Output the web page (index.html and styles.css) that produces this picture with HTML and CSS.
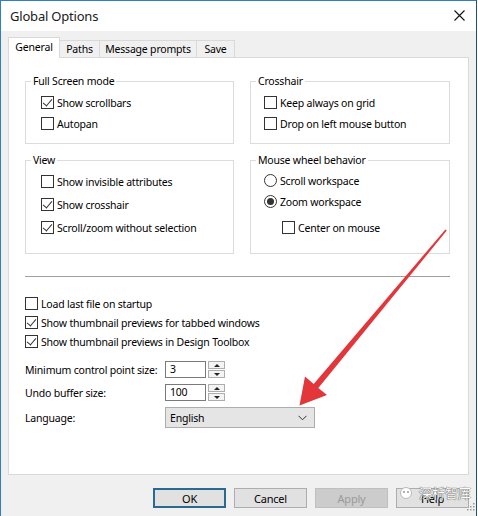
FILE: index.html
```html
<!DOCTYPE html>
<html lang="en">
<head>
<meta charset="UTF-8">
<title>Global Options</title>
<link rel="stylesheet" href="styles.css">
</head>
<body>

<div class="window">
    <div class="titlebar">
        <span>Global Options</span>
        <svg class="close" width="11" height="11" viewBox="0 0 11 11"><path d="M0.5 0.5 L10.5 10.5 M10.5 0.5 L0.5 10.5" stroke="#111" stroke-width="1.1" fill="none"/></svg>
    </div>

    <div class="client">
        <div class="tabs">
            <div class="tab active" style="width: 50px">General</div>
            <div class="tab" style="width: 39px">Paths</div>
            <div class="tab" style="width: 96px">Message prompts</div>
            <div class="tab" style="width: 37px">Save</div>
        </div>

        <div class="panel">
            <div class="groups">
                <fieldset>
                    <legend>Full Screen mode</legend>
                    <div class="opt tall"><span class="box checked"></span>Show scrollbars</div>
                    <div class="opt tall"><span class="box"></span>Autopan</div>
                </fieldset>
                <fieldset class="right">
                    <legend>Crosshair</legend>
                    <div class="opt tall"><span class="box"></span>Keep always on grid</div>
                    <div class="opt tall"><span class="box"></span>Drop on left mouse button</div>
                </fieldset>
                <fieldset class="second">
                    <legend>View</legend>
                    <div class="opt wide"><span class="box"></span>Show invisible attributes</div>
                    <div class="opt wide"><span class="box checked"></span>Show crosshair</div>
                    <div class="opt wide"><span class="box checked"></span>Scroll/zoom without selection</div>
                </fieldset>
                <fieldset class="right second">
                    <legend>Mouse wheel behavior</legend>
                    <div class="opt tall"><span class="radio"></span>Scroll workspace</div>
                    <div class="opt tall"><span class="radio on"></span>Zoom workspace</div>
                    <div class="opt wide sub"><span class="box"></span>Center on mouse</div>
                </fieldset>
            </div>

            <div class="separator"></div>

            <div class="opt"><span class="box"></span>Load last file on startup</div>
            <div class="opt"><span class="box checked"></span>Show thumbnail previews for tabbed windows</div>
            <div class="opt"><span class="box checked"></span>Show thumbnail previews in Design Toolbox</div>

            <div class="fields">
                <label>Minimum control point size:</label>
                <div class="spin">
                    <div class="num">3</div>
                    <div class="arrows"><span class="up"></span><span class="down"></span></div>
                </div>
                <label>Undo buffer size:</label>
                <div class="spin">
                    <div class="num">100</div>
                    <div class="arrows"><span class="up"></span><span class="down"></span></div>
                </div>
                <label>Language:</label>
                <div class="combo">
                    <span>English</span>
                    <svg width="9" height="6" viewBox="0 0 9 6"><path d="M0.5 0.8 L4.5 4.8 L8.5 0.8" stroke="#333" stroke-width="1" fill="none"/></svg>
                </div>
            </div>
        </div>

        <div class="buttons">
            <button class="default">OK</button>
            <button>Cancel</button>
            <button disabled>Apply</button>
            <button>Help</button>
        </div>
    </div>

    <svg class="overlay" width="478" height="516" viewBox="0 0 478 516">
        <path d="M445.4 229.5 L446.8 230.6 L318.3 387.9 L327 395 L299.5 405.5 L305 376.5 L313.7 384.1 Z" fill="#e2363b"/>
        <g fill="#9a9a9a">
            <rect x="473" y="503" width="1.5" height="1.5"/>
            <rect x="470" y="506" width="1.5" height="1.5"/>
            <rect x="473" y="506" width="1.5" height="1.5"/>
            <rect x="467" y="509" width="1.5" height="1.5"/>
            <rect x="470" y="509" width="1.5" height="1.5"/>
            <rect x="473" y="509" width="1.5" height="1.5"/>
        </g>
    </svg>

    <div class="watermark">
        <svg width="15" height="14" viewBox="0 0 15 14"><circle cx="7" cy="7" r="5.5" fill="#fff" stroke="#bbb"/><circle cx="5" cy="6" r="1" fill="#999"/><circle cx="9" cy="6" r="1" fill="#999"/></svg>
        <span>深析智库</span>
    </div>
</div>

</body>
</html>
```

FILE: styles.css
```css
body {
    margin: 0;
    font-family: "Noto Sans", "Noto Sans CJK SC", sans-serif;
    font-size: 10.5px;
    letter-spacing: -0.2px;
    color: #000;
}
.window {
    position: relative;
    width: 477px;
    height: 516px;
    box-sizing: border-box;
    border: 1px solid #2f7fc4;
    border-right-color: #1d4f7a;
    border-bottom: none;
    display: flex;
    flex-direction: column;
    background: #f0f0f0;
}
.titlebar {
    height: 30px;
    flex: none;
    background: #fff;
    display: flex;
    align-items: center;
    justify-content: space-between;
    padding: 0 11px 0 9px;
    font-size: 13px;
    color: #1a1a1a;
}
.close {
    margin-top: -1px;
}
.client {
    flex: 1;
    padding: 6px 7px 0 7px;
}
.tabs {
    display: flex;
    align-items: flex-end;
    height: 20px;
}
.tab {
    height: 16px;
    line-height: 16px;
    border: 1px solid #d9d9d9;
    border-bottom: none;
    text-align: center;
    background: #f0f0f0;
    margin-left: -1px;
}
.tab.active {
    height: 20px;
    line-height: 18px;
    margin-left: 0;
    margin-bottom: -1px;
    background: #fff;
    position: relative;
    z-index: 1;
}
.panel {
    height: 418px;
    box-sizing: border-box;
    background: #fff;
    border: 1px solid #d9d9d9;
    padding: 15px 18px 0 16px;
}
.groups {
    display: grid;
    grid-template-columns: 209px 200px;
    column-gap: 16px;
    row-gap: 8px;
}
fieldset {
    margin: 0;
    min-width: 0;
    border: 1px solid #dcdcdc;
    padding: 3px 8px 9px 15px;
}
fieldset.right {
    padding-left: 13px;
}
fieldset.second {
    padding-top: 2px;
    padding-bottom: 14px;
}
legend {
    padding: 0 2px;
    margin-left: -10px;
    line-height: 16px;
}
fieldset.right legend {
    margin-left: -8px;
}
.opt {
    display: flex;
    align-items: center;
    gap: 3px;
    height: 19px;
    white-space: nowrap;
}
.opt.tall {
    height: 21px;
}
.opt.wide {
    height: 23px;
}
.opt.sub {
    margin-left: 18px;
    margin-top: 4px;
}
.box, .radio {
    width: 13px;
    height: 13px;
    box-sizing: border-box;
    border: 1px solid #333;
    background: #fff;
    flex: none;
    position: relative;
}
.box.checked::after {
    content: "";
    position: absolute;
    left: 3px;
    top: 0px;
    width: 4px;
    height: 8px;
    border: solid #333;
    border-width: 0 1.2px 1.2px 0;
    transform: rotate(40deg);
}
.radio {
    border-radius: 50%;
}
.radio.on::after {
    content: "";
    position: absolute;
    left: 2px;
    top: 2px;
    width: 7px;
    height: 7px;
    border-radius: 50%;
    background: #333;
}
.separator {
    margin: 22px 0 17px;
    border-top: 1px solid #a0a0a0;
}
.fields {
    margin-top: 10px;
    display: grid;
    grid-template-columns: 140px auto;
    grid-template-rows: 17px 17px 21px;
    row-gap: 6px;
    align-items: center;
    justify-items: start;
    white-space: nowrap;
}
.spin {
    display: flex;
    gap: 2px;
    height: 17px;
}
.num {
    width: 41px;
    box-sizing: border-box;
    border: 1px solid #7a7a7a;
    padding-left: 4px;
    line-height: 15px;
}
.arrows {
    width: 17px;
    display: flex;
    flex-direction: column;
    gap: 1px;
}
.arrows span {
    flex: 1;
    border: 1px solid #adadad;
    background: #f4f4f4;
    display: flex;
    align-items: center;
    justify-content: center;
}
.arrows .up::after {
    content: "";
    border: 3px solid transparent;
    border-bottom: 3px solid #222;
    border-top: none;
}
.arrows .down::after {
    content: "";
    border: 3px solid transparent;
    border-top: 3px solid #222;
    border-bottom: none;
}
.combo {
    width: 150px;
    height: 21px;
    box-sizing: border-box;
    background: #e5e5e5;
    border: 1px solid #adadad;
    display: flex;
    align-items: center;
    justify-content: space-between;
    padding: 0 7px 0 4px;
}
.buttons {
    display: flex;
    justify-content: flex-end;
    gap: 8px;
    margin-top: 13px;
}
button {
    width: 73px;
    height: 20px;
    padding: 0;
    font-family: inherit;
    font-size: 11px;
    letter-spacing: -0.2px;
    color: #000;
    background: #e1e1e1;
    border: 1px solid #adadad;
}
button.default {
    border: 2px solid #2a6a92;
}
button:disabled {
    background: #cccccc;
    border-color: #bfbfbf;
    color: #9a9a9a;
}
.overlay {
    position: absolute;
    left: -1px;
    top: -1px;
    pointer-events: none;
}
.watermark {
    position: absolute;
    left: 398px;
    top: 482px;
    display: flex;
    align-items: center;
    gap: 5px;
    color: #fff;
    font-size: 13px;
    letter-spacing: 0;
    text-shadow: 0 0 1px #444, 0 0 1px #444;
}
```
